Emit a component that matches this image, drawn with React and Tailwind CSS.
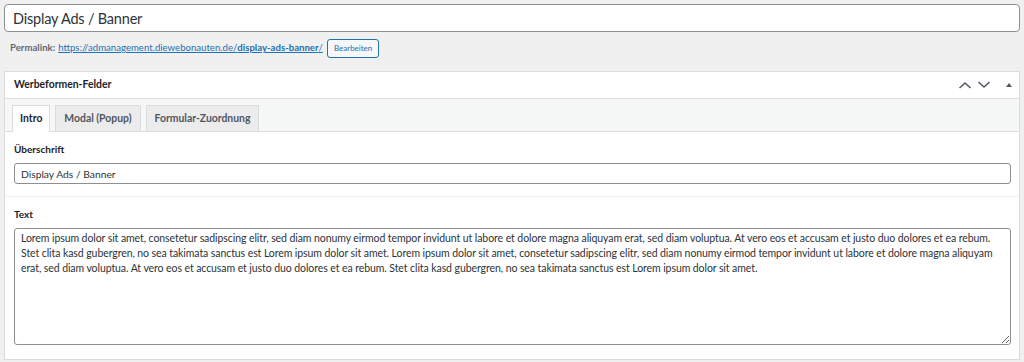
import { useState } from 'react'

const loremText =
  'Lorem ipsum dolor sit amet, consetetur sadipscing elitr, sed diam nonumy eirmod tempor invidunt ut labore et dolore magna aliquyam erat, sed diam voluptua. At vero eos et accusam et justo duo dolores et ea rebum. Stet clita kasd gubergren, no sea takimata sanctus est Lorem ipsum dolor sit amet. Lorem ipsum dolor sit amet, consetetur sadipscing elitr, sed diam nonumy eirmod tempor invidunt ut labore et dolore magna aliquyam erat, sed diam voluptua. At vero eos et accusam et justo duo dolores et ea rebum. Stet clita kasd gubergren, no sea takimata sanctus est Lorem ipsum dolor sit amet.'

const tabs = ['Intro', 'Modal (Popup)', 'Formular-Zuordnung']

function ChevronUp() {
  return (
    <svg width="16" height="14" viewBox="0 0 16 14" fill="none" stroke="#50575e" strokeWidth="1.5">
      <path d="M2.5 10 8 5l5.5 5" />
    </svg>
  )
}

function ChevronDown() {
  return (
    <svg width="16" height="14" viewBox="0 0 16 14" fill="none" stroke="#50575e" strokeWidth="1.5">
      <path d="M2.5 4 8 9l5.5-5" />
    </svg>
  )
}

function TriangleUp() {
  return (
    <svg width="10" height="10" viewBox="0 0 10 10" fill="#50575e">
      <path d="M2 7h6L5 3z" />
    </svg>
  )
}

export default function App() {
  const [title, setTitle] = useState('Display Ads / Banner')
  const [heading, setHeading] = useState('Display Ads / Banner')
  const [text, setText] = useState(loremText)
  const [activeTab, setActiveTab] = useState('Intro')

  return (
    <div className="h-[362px] overflow-hidden bg-[#f0f0f1] px-1 pt-1 font-['Lato',sans-serif] text-[13px] text-[#3c434a]">
      <input
        value={title}
        onChange={(event) => setTitle(event.target.value)}
        className="block h-[28px] w-[1016px] rounded-[4px] border border-[#8c8f94] bg-white px-[8px] text-[14.5px] leading-none tracking-[-0.2px] text-[#2c3338] outline-none"
      />

      <div className="mt-[6px] flex h-[20px] items-center pl-[6px] text-[9.6px]">
        <span className="font-bold text-[#646970]">Permalink:</span>
        <a href="#" className="ml-[3px] text-[#2271b1] underline">
          https://admanagement.diewebonauten.de/<span className="font-bold">display-ads-banner</span>/
        </a>
        <button
          type="button"
          className="ml-[4px] h-[19px] rounded-[3px] border border-[#2271b1] bg-[#f6f7f7] px-[6px] text-[8px] leading-none text-[#2271b1]"
        >
          Bearbeiten
        </button>
      </div>

      <div className="mt-[13px] w-[1016px] border border-[#dcdcde] bg-white">
        <div className="flex h-[27px] items-center justify-between border-b border-[#dcdcde] pl-[9px] pr-[5px]">
          <h2 className="text-[10.4px] font-bold text-[#1d2327]">Werbeformen-Felder</h2>
          <div className="flex items-center gap-[3px]">
            <ChevronUp />
            <ChevronDown />
            <span className="ml-[9px]">
              <TriangleUp />
            </span>
          </div>
        </div>

        <div className="flex h-[33px] items-end gap-[5px] border-b border-[#dcdcde] bg-[#f6f7f7] pl-[7px]">
          {tabs.map((tab) => (
            <button
              key={tab}
              type="button"
              onClick={() => setActiveTab(tab)}
              className={
                activeTab === tab
                  ? 'relative -mb-px h-[27px] border border-b-0 border-[#dcdcde] bg-white px-[7px] text-[10.4px] font-bold text-[#1d2327]'
                  : 'h-[26px] border border-b-0 border-[#dcdcde] bg-[#ececed] px-[8px] text-[10.4px] font-bold text-[#50575e]'
              }
            >
              {tab}
            </button>
          ))}
        </div>

        <div className="border-b border-[#f0f0f1] px-[9px] pb-[12px] pt-[10px]">
          <label className="block text-[10px] font-bold text-[#1d2327]">Überschrift</label>
          <input
            value={heading}
            onChange={(event) => setHeading(event.target.value)}
            className="mt-[6px] block h-[21px] w-[997px] rounded-[3px] border border-[#8c8f94] bg-white px-[6px] text-[10.3px] text-[#2c3338] outline-none"
          />
        </div>

        <div className="px-[9px] pb-[14px] pt-[10px]">
          <label className="block text-[10px] font-bold text-[#1d2327]">Text</label>
          <textarea
            value={text}
            onChange={(event) => setText(event.target.value)}
            className="mt-[6px] block h-[117px] w-[997px] resize-y rounded-[3px] border border-[#8c8f94] bg-white px-[6px] py-[2px] text-[10.5px] leading-[15px] tracking-[-0.08px] text-[#2c3338] outline-none"
          />
        </div>
      </div>
    </div>
  )
}
